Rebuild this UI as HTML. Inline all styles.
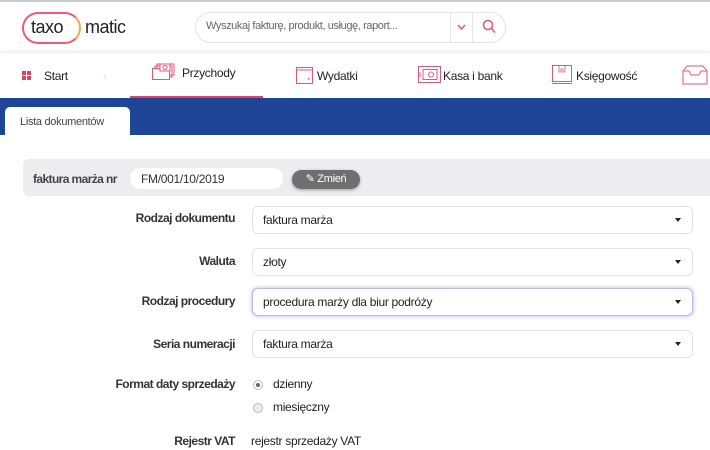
<!DOCTYPE html>
<html><head><meta charset="utf-8"><style>
*{margin:0;padding:0;box-sizing:border-box}
body{width:710px;height:450px;overflow:hidden;background:#fff;font-family:"Liberation Sans",sans-serif;color:#222;position:relative;font-size:12px;letter-spacing:-0.3px}
.a{position:absolute;white-space:nowrap}
.sel{position:absolute;left:252px;width:441px;height:28px;border:1px solid #e3e3e8;border-radius:6px;padding:0 10px;line-height:26px;font-size:12px;background:#fff}
.sel:after{content:"";position:absolute;right:11px;top:11px;border-left:3.5px solid transparent;border-right:3.5px solid transparent;border-top:4px solid #222}
.lab{position:absolute;right:475px;font-weight:bold;font-size:12px;color:#333;letter-spacing:-0.5px}
.nav{position:absolute;top:69px;font-size:12px;color:#222}
</style></head><body>
<div class="a" style="left:0;top:0;width:710px;height:2px;background:#ccc"></div>
<div class="a" style="left:22px;top:12px;width:59px;height:32px;border:2px solid #ec5a7e;border-right-color:#f5a84a;border-radius:16px"></div>
<div class="a" style="left:31px;top:17px;font-size:18px;color:#222;letter-spacing:-0.5px">taxo</div>
<div class="a" style="left:85px;top:17px;font-size:18px;color:#222;letter-spacing:-0.5px">matic</div>
<div class="a" style="left:195px;top:12px;width:311px;height:31px;border:1px solid #e3e3e8;border-radius:16px;background:#fff"></div>
<div class="a" style="left:206px;top:20px;font-size:11px;color:#666;letter-spacing:-0.4px">Wyszukaj fakturę, produkt, usługę, raport...</div>
<div class="a" style="left:450px;top:12px;width:1px;height:31px;background:#e3e3e8"></div>
<div class="a" style="left:472px;top:12px;width:1px;height:31px;background:#e3e3e8"></div>
<svg class="a" style="left:457px;top:24px" width="9" height="7"><path d="M1 1l3.5 4L8 1" fill="none" stroke="#e0567a" stroke-width="1.5"/></svg>
<svg class="a" style="left:482px;top:19px" width="14" height="15"><circle cx="6" cy="6" r="4.5" fill="none" stroke="#e0567a" stroke-width="1.5"/><line x1="9.5" y1="9.5" x2="13" y2="13.5" stroke="#e0567a" stroke-width="1.5"/></svg>
<div class="a" style="left:0;top:53px;width:710px;height:44px;background:#fff;box-shadow:0 -2px 4px rgba(0,0,0,.08)"></div>
<svg class="a" style="left:22px;top:71px" width="9" height="9"><rect width="4" height="4" fill="#e0405f"/><rect x="5" width="4" height="4" fill="#e0405f"/><rect y="5" width="4" height="4" fill="#e0405f"/><rect x="5" y="5" width="4" height="4" fill="#e0405f"/></svg>
<div class="nav" style="left:44px">Start</div>
<div class="nav" style="left:103px;color:#ddd">‹</div>
<svg class="a" style="left:152px;top:63px" width="24" height="18"><rect x="5" y="1" width="17" height="11" fill="none" stroke="#e0567a"/><rect x="3" y="3" width="17" height="11" fill="none" stroke="#e0567a"/><rect x="0.5" y="5.5" width="17" height="11" fill="#fff" stroke="#e0567a"/><rect x="8" y="1" width="10" height="7" fill="#fff" stroke="#e0567a"/><circle cx="13" cy="4.5" r="2" fill="none" stroke="#e0567a"/></svg>
<div class="nav" style="left:182px;top:66px">Przychody</div>
<div class="a" style="left:130px;top:96px;width:133px;height:3px;background:#e8405f"></div>
<svg class="a" style="left:296px;top:66px" width="17" height="18"><rect x="0.5" y="1.5" width="16" height="16" fill="none" stroke="#e0567a"/><path d="M0.5 4h16" stroke="#e0567a"/><rect x="12" y="12" width="1.5" height="1.5" fill="#e0567a"/></svg>
<div class="nav" style="left:317px">Wydatki</div>
<svg class="a" style="left:418px;top:66px" width="23" height="17"><rect x="0.5" y="0.5" width="22" height="16" fill="none" stroke="#e0567a"/><rect x="5" y="3.5" width="14" height="10" fill="none" stroke="#e0567a"/><circle cx="13" cy="8.5" r="2.5" fill="none" stroke="#e0567a"/><path d="M2 6v5" stroke="#e0567a"/></svg>
<div class="nav" style="left:443px">Kasa i bank</div>
<svg class="a" style="left:552px;top:65px" width="20" height="19"><rect x="0.5" y="0.5" width="19" height="16" fill="none" stroke="#e0567a"/><line x1="0" y1="18.5" x2="20" y2="18.5" stroke="#e0567a"/><path d="M7 1v6h2V4h2v3h2V1" fill="none" stroke="#e0567a" stroke-width=".8"/></svg>
<div class="nav" style="left:576px">Księgowość</div>
<svg class="a" style="left:682px;top:65px" width="28" height="20"><path d="M1 6L5 1h16l4 5v13H1z M1 6h6l2 4h8l2-4h6" fill="none" stroke="#e0567a"/></svg>
<div class="a" style="left:0;top:98px;width:710px;height:37px;background:#1f4596"></div>
<div class="a" style="left:5px;top:107px;width:125px;height:30px;background:#fff;border-radius:5px 5px 0 0"></div>
<div class="a" style="left:20px;top:116px;font-size:11px;color:#444">Lista dokumentów</div>
<div class="a" style="left:23px;top:159px;width:687px;height:37px;background:#ededf0;border-radius:6px 0 0 6px"></div>
<div class="a" style="left:33px;top:172px;font-size:12px;font-weight:bold;color:#444;letter-spacing:-0.6px">faktura marża nr</div>
<div class="a" style="left:130px;top:168px;width:153px;height:21px;background:#fff;border-radius:10px"></div>
<div class="a" style="left:141px;top:172px;font-size:12px;color:#333">FM/001/10/2019</div>
<div class="a" style="left:292px;top:170px;width:68px;height:19px;background:#6f6f6f;border-radius:10px;color:#fff;font-size:11px;line-height:19px;text-align:center;box-shadow:0 1px 3px rgba(0,0,0,.35)">✎ Zmień</div>
<div class="lab" style="top:211px">Rodzaj dokumentu</div>
<div class="sel" style="top:206px">faktura marża</div>
<div class="lab" style="top:254px">Waluta</div>
<div class="sel" style="top:248px">złoty</div>
<div class="lab" style="top:294px">Rodzaj procedury</div>
<div class="sel" style="top:288px;border-color:#b5bde0;box-shadow:0 0 4px rgba(90,110,200,.5)">procedura marży dla biur podróży</div>
<div class="lab" style="top:337px">Seria numeracji</div>
<div class="sel" style="top:330px">faktura marża</div>
<div class="lab" style="top:377px">Format daty sprzedaży</div>
<div class="a" style="left:253px;top:380px;width:10px;height:10px;border:1px solid #bbb;border-radius:50%;background:#fff"></div>
<div class="a" style="left:256px;top:383px;width:4px;height:4px;border-radius:50%;background:#666"></div>
<div class="a" style="left:273px;top:377px">dzienny</div>
<div class="a" style="left:253px;top:403px;width:10px;height:10px;border:1px solid #bbb;border-radius:50%;background:#eee"></div>
<div class="a" style="left:273px;top:400px">miesięczny</div>
<div class="lab" style="top:434px">Rejestr VAT</div>
<div class="a" style="left:251px;top:434px">rejestr sprzedaży VAT</div>
</body></html>
